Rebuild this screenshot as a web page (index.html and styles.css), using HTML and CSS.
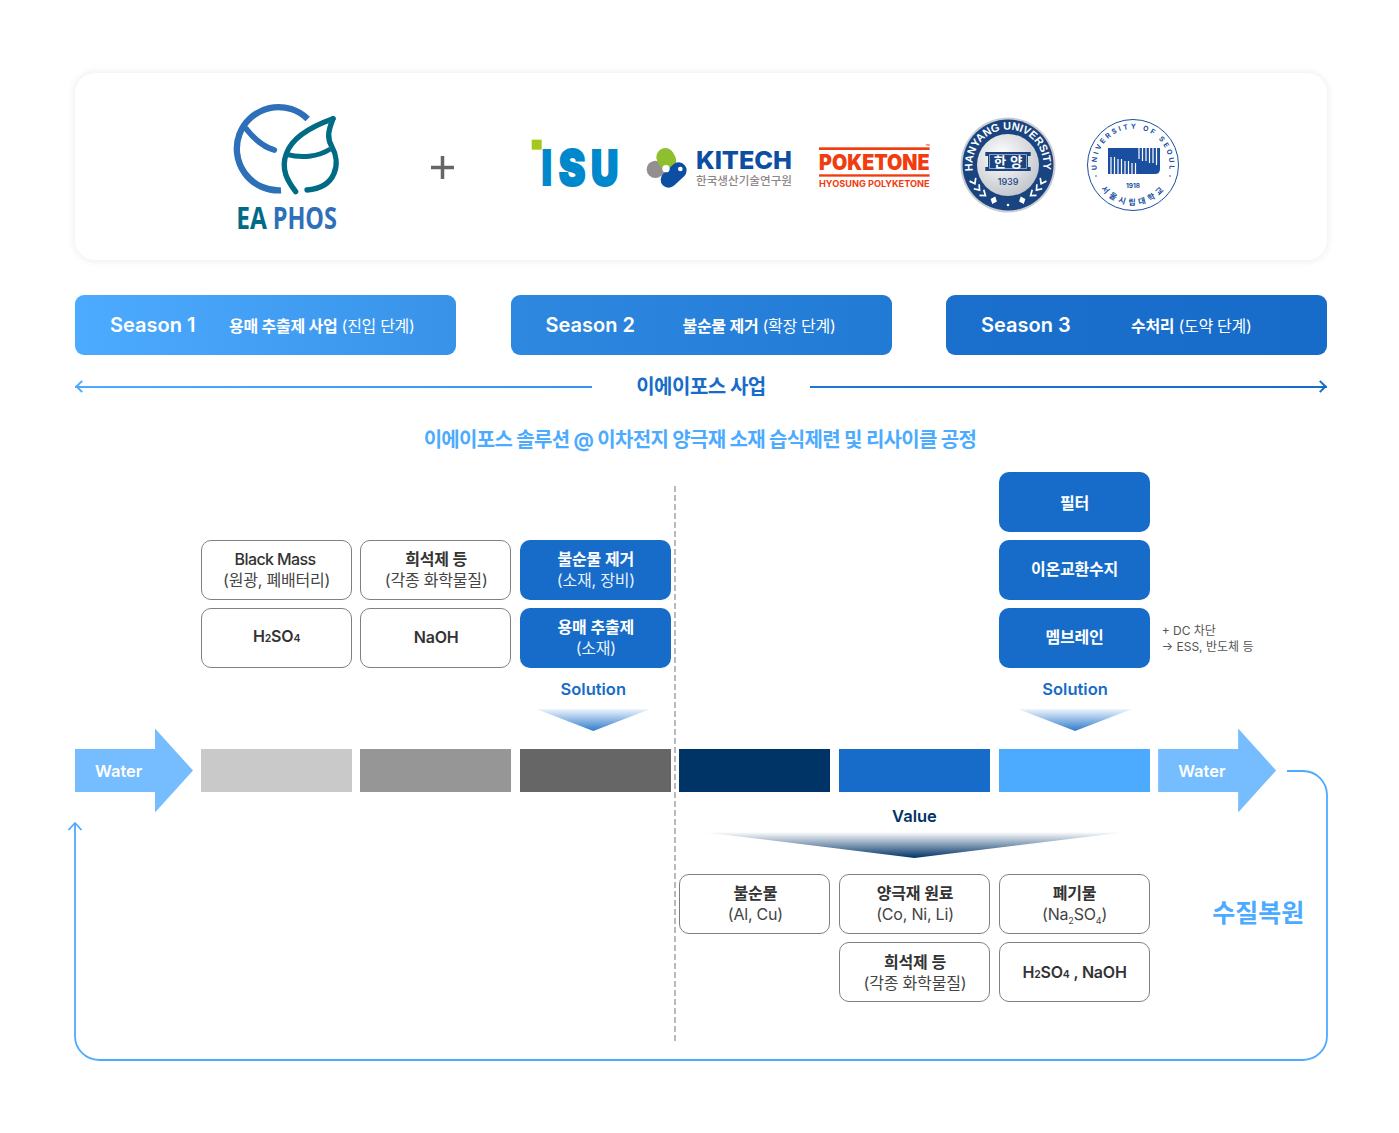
FILE: index.html
```html
<!doctype html>
<html lang="ko">
    <head>
        <meta charset="utf-8">
        <title>이에이포스 사업</title>
        <link rel="stylesheet" href="styles.css">
    </head>
    <body>
        <div class="page">
            <div class="logoCard">
                <svg class="logo logoEaphos" viewBox="490 130 330 415">
                    <path d="M714 178 A125 125 0 1 0 634 392" fill="none" stroke="#2d70b9" stroke-width="19"/>
                    <path d="M530 208 C555 240 580 262 614 271" fill="none" stroke="#2d70b9" stroke-width="17" stroke-linecap="round"/>
                    <path d="M790 177 C720 202 665 238 650 282 C632 330 655 365 678 396" fill="none" stroke="#006b85" stroke-width="16" stroke-linecap="round"/>
                    <path d="M790 177 C775 215 772 235 786 260 C815 310 800 385 712 391" fill="none" stroke="#006b85" stroke-width="16" stroke-linecap="round"/>
                    <path d="M650 284 C695 296 745 292 782 268" fill="none" stroke="#006b85" stroke-width="15"/>
                    <text class="eaText" x="500" y="509" textLength="92" lengthAdjust="spacingAndGlyphs" fill="#006b85">EA</text>
                    <text class="eaText" x="609" y="509" textLength="193" lengthAdjust="spacingAndGlyphs" fill="#2d70b9">PHOS</text>
                </svg>
                <svg class="logo logoPlus" viewBox="0 0 23 23">
                    <path d="M0 11.5H23M11.5 0V23" stroke="#666" stroke-width="3.5"/>
                </svg>
                <svg class="logo logoIsu" viewBox="60 115 270 190">
                    <rect x="65" y="120" width="30" height="30" fill="#a5c91a"/>
                    <text class="isuText" x="95" y="257" textLength="30" lengthAdjust="spacingAndGlyphs">I</text>
                    <text class="isuText" x="146" y="257" textLength="80" lengthAdjust="spacingAndGlyphs">S</text>
                    <text class="isuText" x="243" y="257" textLength="82" lengthAdjust="spacingAndGlyphs">U</text>
                </svg>
                <svg class="logo logoKitech" viewBox="410 140 440 140">
                    <circle cx="438" cy="207" r="26" fill="#958e90"/>
                    <path d="M438 207H472" stroke="#958e90" stroke-width="36"/>
                    <path d="M468 170L474 182" stroke="#8fbe2e" stroke-width="54" stroke-linecap="round"/>
                    <path d="M478 238L508 210" stroke="#0b4ea2" stroke-width="48" stroke-linecap="round"/>
                    <circle cx="470" cy="205" r="11" fill="#fff"/>
                    <circle cx="513" cy="206" r="7" fill="#fff"/>
                    <text class="kitechText" x="560" y="205" textLength="288" lengthAdjust="spacingAndGlyphs">KITECH</text>
                    <text class="kitechSub" x="560" y="254" textLength="288" lengthAdjust="spacingAndGlyphs">한국생산기술연구원</text>
                </svg>
                <svg class="logo logoPoketone" viewBox="925 125 337 145">
                    <rect x="928" y="141" width="332" height="8" fill="#f03c0f"/>
                    <rect x="928" y="222" width="332" height="7" fill="#f03c0f"/>
                    <text class="pokeTm" x="1248" y="136">TM</text>
                    <text class="pokeText" x="928" y="208" textLength="332" lengthAdjust="spacingAndGlyphs">POKETONE</text>
                    <text class="pokeSub" x="928" y="260" textLength="332" lengthAdjust="spacingAndGlyphs">HYOSUNG POLYKETONE</text>
                </svg>
                <svg class="logo logoHanyang" viewBox="-48 -48 96 96">
                    <defs>
                        <radialGradient id="sealInner" cx="40%" cy="35%" r="75%">
                            <stop offset="0" stop-color="#ffffff"/>
                            <stop offset="1" stop-color="#bcc0c6"/>
                        </radialGradient>
                        <path id="sealArc" d="M-35 6 A35.5 35.5 0 1 1 35 6"/>
                        <path id="sealLeaf" d="M-3.8 34.5L1 38L-3.8 41.5" fill="none" stroke="#fff" stroke-width="1.7"/>
                    </defs>
                    <circle r="47.5" fill="#c9ccd2"/>
                    <circle r="45.5" fill="#1a4480"/>
                    <circle r="31" fill="url(#sealInner)"/>
                    <text class="sealText"><textPath href="#sealArc" textLength="122" lengthAdjust="spacingAndGlyphs">HANYANG UNIVERSITY</textPath></text>
                    <path d="M-22.7 -13H22.7V-9H20V2H22.7V6H-22.7V2H-20V-9H-22.7Z" fill="#1a4480"/>
                    <path d="M-18.5 -10.5H18.5V3.5H-18.5Z" fill="none" stroke="#dfe3ea" stroke-width="0.6"/>
                    <text class="sealName" x="0" y="1.5" text-anchor="middle">한 양</text>
                    <text class="sealYear" x="0" y="20" text-anchor="middle">1939</text>
                    <g fill="#fff">
                        <g transform="rotate(22)"><path d="M0 34l3.4 4-3.4 4-3.4-4z"/></g>
                        <g transform="rotate(-22)"><path d="M0 34l3.4 4-3.4 4-3.4-4z"/></g>
                        <circle cx="0" cy="40" r="1.3"/>
                    </g>
                    <use href="#sealLeaf" transform="rotate(38)"/>
                    <use href="#sealLeaf" transform="rotate(50)"/>
                    <use href="#sealLeaf" transform="rotate(62)"/>
                    <use href="#sealLeaf" transform="scale(-1 1) rotate(38)"/>
                    <use href="#sealLeaf" transform="scale(-1 1) rotate(50)"/>
                    <use href="#sealLeaf" transform="scale(-1 1) rotate(62)"/>
                </svg>
                <svg class="logo logoSeoul" viewBox="-47 -47 94 94">
                    <defs>
                        <path id="seoulTop" d="M-36.2 5 A36.5 36.5 0 1 1 36.2 5"/>
                        <path id="seoulBottom" d="M-32 24 A40 40 0 0 0 32 24"/>
                    </defs>
                    <circle r="45.5" fill="#fff" stroke="#1a4fa0" stroke-width="1"/>
                    <text class="seoulText"><textPath href="#seoulTop" textLength="123" lengthAdjust="spacing">UNIVERSITY OF SEOUL</textPath></text>
                    <circle cx="-37" cy="11" r="0.8" fill="#1a4fa0"/>
                    <circle cx="37" cy="11" r="0.8" fill="#1a4fa0"/>
                    <path d="M-25 -17H27V4Q27 9 22 9H-25Z" fill="#1a4fa0"/>
                    <path d="M-22 -8V9M-18.5 -8V9M-15 -6V9M-11.5 -6V9M-8 -4V9M-4.5 -4V9M-1 -2V9M2.5 -2V9M6 -17V-6M9.5 -17V-4M13 -17V-4M16.5 -17V-2M20 -17V-2M23.5 -17V0" stroke="#fff" stroke-width="1.2"/>
                    <text class="seoulYear" x="0" y="23" text-anchor="middle">1918</text>
                    <text class="seoulName"><textPath href="#seoulBottom" textLength="72" lengthAdjust="spacing">서울시립대학교</textPath></text>
                </svg>
            </div>

            <div class="seasons">
                <div class="season season1">
                    <div class="seasonTitle">Season 1</div>
                    <div class="seasonText"><b>용매 추출제 사업</b> (진입 단계)</div>
                </div>
                <div class="season season2">
                    <div class="seasonTitle">Season 2</div>
                    <div class="seasonText"><b>불순물 제거</b> (확장 단계)</div>
                </div>
                <div class="season season3">
                    <div class="seasonTitle">Season 3</div>
                    <div class="seasonText"><b>수처리</b> (도약 단계)</div>
                </div>
            </div>

            <div class="spanRow">
                <div class="spanLine spanLine_left"></div>
                <div class="spanTitle">이에이포스 사업</div>
                <div class="spanLine spanLine_right"></div>
            </div>

            <div class="solutionTitle">이에이포스 솔루션 @ 이차전지 양극재 소재 습식제련 및 리사이클 공정</div>

            <div class="process">
                <svg class="processLines" viewBox="0 0 1252 600">
                    <line x1="600" y1="14" x2="600" y2="572" stroke="#a3a3a3" stroke-width="1.5" stroke-dasharray="6 3"/>
                    <path d="M1212 299H1228A24 24 0 0 1 1252 323V564A24 24 0 0 1 1228 588H24A24 24 0 0 1 0 564V352" fill="none" stroke="#4dabff" stroke-width="1.8"/>
                    <path d="M-6.5 358L0 351L6.5 358" fill="none" stroke="#4dabff" stroke-width="1.8"/>
                </svg>

                <div class="box box_solid box_top col6 row1"><b>필터</b></div>
                <div class="box col2 row2"><span class="latinName">Black Mass</span><span>(원광, 폐배터리)</span></div>
                <div class="box col3 row2"><b>희석제 등</b><span>(각종 화학물질)</span></div>
                <div class="box box_solid col4 row2"><b>불순물 제거</b><span>(소재, 장비)</span></div>
                <div class="box box_solid col6 row2"><b>이온교환수지</b></div>
                <div class="box col2 row3"><b>H<small>2</small>SO<small>4</small></b></div>
                <div class="box col3 row3"><b>NaOH</b></div>
                <div class="box box_solid col4 row3"><b>용매 추출제</b><span>(소재)</span></div>
                <div class="box box_solid col6 row3"><b>멤브레인</b></div>
                <div class="note col7 row3"><span>+ DC 차단</span><span>→ ESS, 반도체 등</span></div>

                <div class="callout callout_left col4 row4">
                    <div class="calloutLabel">Solution</div>
                    <div class="chevron"></div>
                </div>
                <div class="callout callout_right col6 row4">
                    <div class="calloutLabel">Solution</div>
                    <div class="chevron"></div>
                </div>

                <div class="water col1 row5">Water</div>
                <div class="bar bar1 col2 row5"></div>
                <div class="bar bar2 col3 row5"></div>
                <div class="bar bar3 col4 row5"></div>
                <div class="bar bar4 row5"></div>
                <div class="bar bar5 row5"></div>
                <div class="bar bar6 row5"></div>
                <div class="water col7 row5">Water</div>

                <div class="valueBlock row6">
                    <div class="valueLabel">Value</div>
                    <div class="valueChevron"></div>
                </div>

                <div class="box box_low col5a row7"><b>불순물</b><span>(Al, Cu)</span></div>
                <div class="box box_low col5 row7"><b>양극재 원료</b><span>(Co, Ni, Li)</span></div>
                <div class="box box_low col6 row7"><b>폐기물</b><span>(Na<sub>2</sub>SO<sub>4</sub>)</span></div>
                <div class="box box_top col5 row8"><b>희석제 등</b><span>(각종 화학물질)</span></div>
                <div class="box box_top col6 row8"><b>H<small>2</small>SO<small>4</small> , NaOH</b></div>
                <div class="recovery">수질복원</div>
            </div>
        </div>
    </body>
</html>
```

FILE: styles.css
```css
html, body {
  margin: 0;
  background: #fff;
}

body {
  color: #333;
  font-family: Inter, "Noto Sans CJK KR", sans-serif;
}

.page {
  width: 1252px;
  height: 1060px;
  padding: 73px 0 0 75px;
}

/* Logos */
.logoCard {
  display: flex;
  align-items: flex-start;
  height: 187px;
  padding-left: 158px;
  box-sizing: border-box;
  background: #fff;
  border-radius: 20px;
  box-shadow: 0 0 10px rgba(0, 0, 0, 0.09);
}

.logo {
  display: block;
  flex: none;
  overflow: visible;
}

.logoEaphos { width: 110px; height: 138.3px; margin-top: 30.3px; }
.logoPlus { width: 23px; height: 23px; margin: 82.5px 0 0 88.3px; }
.logoIsu { width: 90px; height: 63.3px; margin: 65.3px 0 0 75.5px; }
.logoKitech { width: 146.7px; height: 46.7px; margin: 73.7px 0 0 26.7px; }
.logoPoketone { width: 112.3px; height: 48.3px; margin: 68.7px 0 0 25px; }
.logoHanyang { width: 96px; height: 96px; margin: 44px 0 0 29.4px; }
.logoSeoul { width: 94px; height: 94px; margin: 45px 0 0 30.5px; }

.eaText {
  font: 700 92px "Open Sans", sans-serif;
}
.isuText {
  fill: #0088cc;
  stroke: #0088cc;
  stroke-width: 6px;
  font: 900 146px Inter, sans-serif;
}
.kitechText {
  fill: #0b4ea2;
  font: 800 74px Inter, sans-serif;
}
.kitechSub {
  fill: #8d8688;
  font: 500 33px "Noto Sans CJK KR", sans-serif;
}
.pokeText {
  fill: #f03c0f;
  font: 900 64px Inter, sans-serif;
}
.pokeSub {
  fill: #f03c0f;
  font: 700 27px Inter, sans-serif;
}
.pokeTm {
  fill: #f03c0f;
  font: 700 8px Inter, sans-serif;
}
.sealText {
  fill: #fff;
  font: 700 11px "Liberation Sans", sans-serif;
}
.sealName {
  fill: #fff;
  font: 700 13.5px "Noto Sans CJK KR", sans-serif;
}
.sealYear {
  fill: #1a4480;
  font: 500 9px Inter, sans-serif;
}
.seoulText {
  fill: #1a4fa0;
  font: 700 7px Inter, sans-serif;
}
.seoulYear {
  fill: #1a4fa0;
  font: 700 6.5px Inter, sans-serif;
}
.seoulName {
  fill: #1a4fa0;
  font: 700 8px "Noto Sans CJK KR", sans-serif;
}

/* Seasons */
.seasons {
  display: flex;
  justify-content: space-between;
  margin-top: 35px;
}

.season {
  display: flex;
  align-items: center;
  width: 381px;
  height: 60px;
  padding-left: 35px;
  box-sizing: border-box;
  border-radius: 9px;
  color: #fff;
}

.season1 { background: linear-gradient(to right, #4dabff, #3893e8); }
.season2 { background: linear-gradient(to right, #2f88e0, #217ad4); }
.season3 { background: linear-gradient(to right, #1a70cc, #166cc8); }

.seasonTitle {
  font-size: 20px;
  font-weight: 600;
}
.season1 .seasonTitle { width: 119px; }
.season2 .seasonTitle { width: 137px; }
.season3 .seasonTitle { width: 150px; }

.seasonText {
  font-size: 16px;
  font-weight: 400;
  letter-spacing: -0.3px;
}
.seasonText b {
  font-weight: 600;
}

/* Business span arrow */
.spanRow {
  display: flex;
  align-items: center;
  justify-content: space-between;
  height: 24px;
  margin-top: 18px;
}

.spanTitle {
  color: #166cc8;
  font-size: 20px;
  font-weight: 700;
  letter-spacing: -0.5px;
}

.spanLine {
  position: relative;
  width: 517px;
  height: 2px;
  margin-top: 4px;
}
.spanLine::before {
  content: "";
  position: absolute;
  top: -4px;
  width: 9px;
  height: 9px;
  border-style: solid;
  border-width: 0 0 2px 2px;
  box-sizing: border-box;
}
.spanLine_left {
  background: linear-gradient(to right, #4dabff, #3893e8);
}
.spanLine_left::before {
  left: 2px;
  border-color: #4dabff;
  transform: rotate(45deg);
}
.spanLine_right {
  background: linear-gradient(to right, #1f77d0, #166cc8);
}
.spanLine_right::before {
  right: 2px;
  border-color: #166cc8;
  transform: rotate(225deg);
}

.solutionTitle {
  margin-top: 31px;
  padding-right: 2px;
  color: #4dabff;
  font-size: 20px;
  font-weight: 700;
  line-height: 24px;
  letter-spacing: -0.67px;
  text-align: center;
}

/* Process grid */
.process {
  position: relative;
  display: grid;
  grid-template-columns: 117px repeat(6, 151px) 118px 42.4px;
  grid-template-rows: 60px 60px 60px 65px 43px 66px 60px 60px;
  gap: 8px 8.6px;
  margin-top: 20px;
}

.processLines {
  position: absolute;
  top: 0;
  left: 0;
  width: 1252px;
  height: 600px;
  overflow: visible;
  pointer-events: none;
}

.col1 { grid-column: 1; }
.col2 { grid-column: 2; }
.col3 { grid-column: 3; }
.col4 { grid-column: 4; }
.col5a { grid-column: 5; }
.col5 { grid-column: 6; }
.col6 { grid-column: 7; }
.col7 { grid-column: 8; }
.row1 { grid-row: 1; }
.row2 { grid-row: 2; }
.row3 { grid-row: 3; }
.row4 { grid-row: 4; }
.row5 { grid-row: 5; }
.row6 { grid-row: 6; }
.row7 { grid-row: 7; }
.row8 { grid-row: 8; }

.box {
  display: flex;
  flex-direction: column;
  align-items: center;
  justify-content: center;
  padding: 0 0 1px 1px;
  border: 1px solid #808080;
  border-radius: 10px;
  box-sizing: border-box;
  color: #444;
  font-size: 16px;
  line-height: 21px;
  letter-spacing: -0.2px;
  text-align: center;
}
.box b {
  color: #333;
  font-weight: 600;
}
.box small {
  font-size: 10.5px;
}
.box sub {
  font-size: 9px;
  line-height: 0;
}
.box_solid {
  border: 0;
  background: #166cc8;
  color: #e8f2fc;
}
.box_solid b {
  color: #fff;
}
.box_top {
  padding: 2px 0 0 1px;
}
.box_low {
  padding: 0 0 0 1px;
}
.latinName {
  margin-right: 3px;
  color: #333;
  font-weight: 500;
  letter-spacing: -0.6px;
}

.note {
  display: flex;
  flex-direction: column;
  justify-content: center;
  padding: 2px 0 0 3.5px;
  color: #555;
  font-size: 12px;
  line-height: 16px;
  white-space: nowrap;
}

.callout {
  display: flex;
  flex-direction: column;
  align-items: center;
}
.callout_left {
  transform: translateX(-2px);
}
.callout_right {
  transform: translateX(1px);
}
.calloutLabel {
  color: #166cc8;
  font-size: 16.5px;
  font-weight: 600;
  line-height: 26px;
}
.chevron {
  width: 114px;
  height: 22px;
  margin-top: 7px;
  background: linear-gradient(#eef5fc, #2f7ccc);
  clip-path: polygon(0 0, 100% 0, 50% 100%);
}

.bar1 { background: #c9c9c9; }
.bar2 { background: #969696; }
.bar3 { background: #666; }
.bar4 { grid-column: 5; background: #003366; }
.bar5 { grid-column: 6; background: #166cc8; }
.bar6 { grid-column: 7; background: #4dabff; }

.water {
  display: flex;
  align-items: center;
  width: 118px;
  height: 84px;
  margin: -20.5px 0;
  padding-left: 20px;
  box-sizing: border-box;
  background: #75bdff;
  clip-path: polygon(0 20.5px, 80px 20.5px, 80px 0, 118px 42px, 80px 84px, 80px 63.5px, 0 63.5px);
  color: #fff;
  font-size: 16.5px;
  font-weight: 600;
}

.valueBlock {
  grid-column: 5 / span 3;
  display: flex;
  flex-direction: column;
  align-items: center;
}
.valueLabel {
  color: #003366;
  font-size: 16.5px;
  font-weight: 600;
  line-height: 32px;
}
.valueChevron {
  width: 425px;
  height: 26px;
  background: linear-gradient(#ffffff, #003366);
  clip-path: polygon(0 0, 100% 0, 50% 100%);
}

.recovery {
  grid-column: 8 / span 2;
  grid-row: 7;
  justify-self: end;
  margin: 24px 23px 0 0;
  color: #4dabff;
  font-size: 25px;
  font-weight: 700;
  line-height: 30px;
  white-space: nowrap;
}
```
